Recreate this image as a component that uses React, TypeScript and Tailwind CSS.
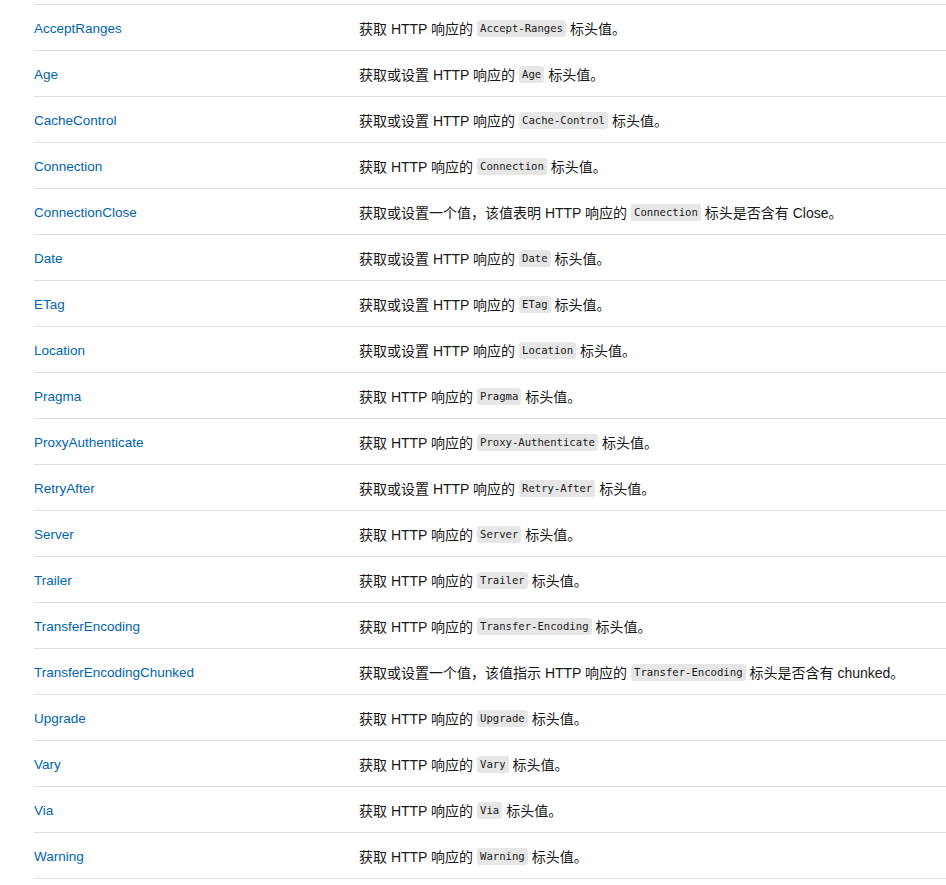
import React from 'react';

type Part = string | { code: string };

interface Row {
  name: string;
  desc: Part[];
}

const rows: Row[] = [
  { name: 'AcceptRanges', desc: ['获取 HTTP 响应的', { code: 'Accept-Ranges' }, '标头值。'] },
  { name: 'Age', desc: ['获取或设置 HTTP 响应的', { code: 'Age' }, '标头值。'] },
  { name: 'CacheControl', desc: ['获取或设置 HTTP 响应的', { code: 'Cache-Control' }, '标头值。'] },
  { name: 'Connection', desc: ['获取 HTTP 响应的', { code: 'Connection' }, '标头值。'] },
  { name: 'ConnectionClose', desc: ['获取或设置一个值，该值表明 HTTP 响应的', { code: 'Connection' }, '标头是否含有 Close。'] },
  { name: 'Date', desc: ['获取或设置 HTTP 响应的', { code: 'Date' }, '标头值。'] },
  { name: 'ETag', desc: ['获取或设置 HTTP 响应的', { code: 'ETag' }, '标头值。'] },
  { name: 'Location', desc: ['获取或设置 HTTP 响应的', { code: 'Location' }, '标头值。'] },
  { name: 'Pragma', desc: ['获取 HTTP 响应的', { code: 'Pragma' }, '标头值。'] },
  { name: 'ProxyAuthenticate', desc: ['获取 HTTP 响应的', { code: 'Proxy-Authenticate' }, '标头值。'] },
  { name: 'RetryAfter', desc: ['获取或设置 HTTP 响应的', { code: 'Retry-After' }, '标头值。'] },
  { name: 'Server', desc: ['获取 HTTP 响应的', { code: 'Server' }, '标头值。'] },
  { name: 'Trailer', desc: ['获取 HTTP 响应的', { code: 'Trailer' }, '标头值。'] },
  { name: 'TransferEncoding', desc: ['获取 HTTP 响应的', { code: 'Transfer-Encoding' }, '标头值。'] },
  { name: 'TransferEncodingChunked', desc: ['获取或设置一个值，该值指示 HTTP 响应的', { code: 'Transfer-Encoding' }, '标头是否含有 chunked。'] },
  { name: 'Upgrade', desc: ['获取 HTTP 响应的', { code: 'Upgrade' }, '标头值。'] },
  { name: 'Vary', desc: ['获取 HTTP 响应的', { code: 'Vary' }, '标头值。'] },
  { name: 'Via', desc: ['获取 HTTP 响应的', { code: 'Via' }, '标头值。'] },
  { name: 'Warning', desc: ['获取 HTTP 响应的', { code: 'Warning' }, '标头值。'] },
];

export default function App() {
  return (
    <div className="min-h-screen bg-white pt-[4px] pl-[34px] font-['Liberation_Sans','Noto_Sans_CJK_SC',sans-serif] text-[14px] text-[#171717]">
      <div className="w-[940px] border-b border-[#e0e0e0]">
        {rows.map((r) => (
          <div key={r.name} className="flex h-[46px] items-center border-t border-[#e0e0e0] pt-[2px]">
            <a href="#" className="w-[325px] shrink-0 leading-[20px] text-[13.5px] text-[#0065b3]">
              {r.name}
            </a>
            <p className="flex items-center whitespace-nowrap leading-[20px]">
              {r.desc.map((p, i) =>
                typeof p === 'string' ? (
                  <span key={i}>{p}</span>
                ) : (
                  <code
                    key={i}
                    className="mx-[4px] h-[17px] rounded-[3px] bg-[#e6e6e6] px-[3px] font-['DejaVu_Sans_Mono',monospace] text-[10.6px] leading-[17px] text-[#171717]"
                  >
                    {p.code}
                  </code>
                )
              )}
            </p>
          </div>
        ))}
      </div>
    </div>
  );
}
